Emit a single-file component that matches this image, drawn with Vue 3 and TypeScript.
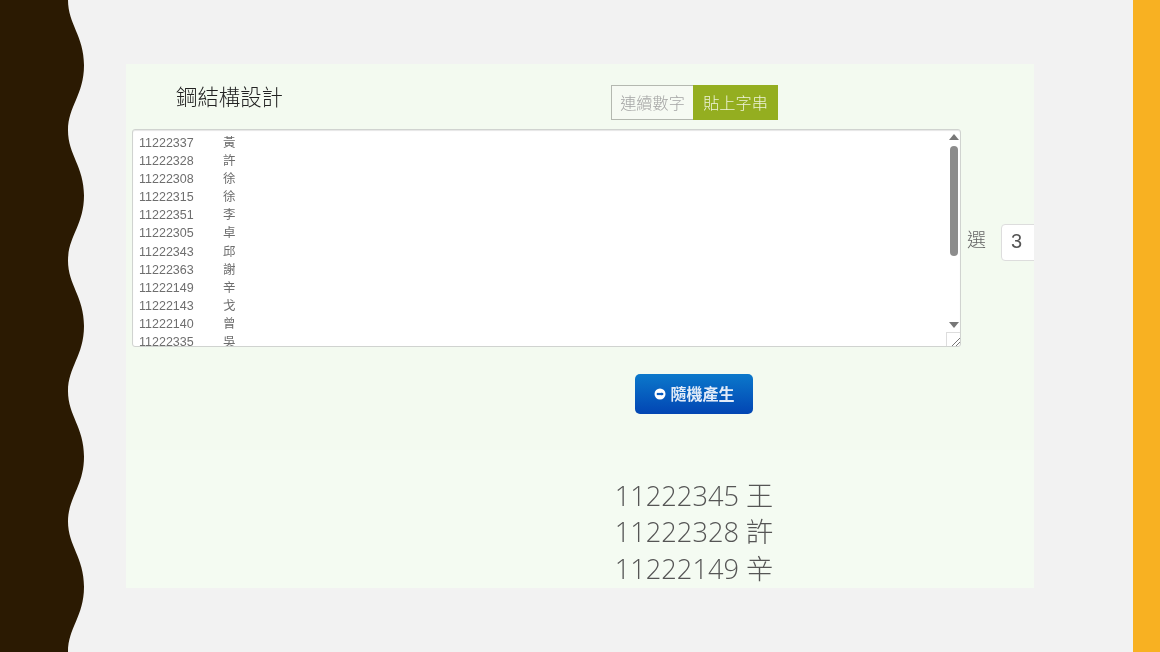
<template>
  <div class="slide">
    <svg class="wave" viewBox="0 0 84 652" width="84" height="652">
      <path :d="wavePath" fill="#2b1a02" />
    </svg>
    <div class="content">
      <div class="card">
        <div class="top">
          <div class="inner">
            <div class="head">
              <div class="title">鋼結構設計</div>
              <div class="toggle">
                <div class="opt">連續數字</div>
                <div class="opt on">貼上字串</div>
              </div>
            </div>
            <div class="form">
              <div class="box">
                <div class="rows">
                  <div v-for="s in students" :key="s.id" class="row">
                    <span>{{ s.id }}</span>
                    <span>{{ s.name }}</span>
                  </div>
                </div>
                <div class="bar">
                  <div class="track">
                    <div class="arrow up"></div>
                    <div class="thumb"></div>
                    <div class="arrow down"></div>
                  </div>
                  <div class="grip">
                    <svg viewBox="0 0 14 14" width="14" height="14">
                      <path d="M5 13 L13 5 M9 13 L13 9" stroke="#777" stroke-width="1" fill="none" />
                    </svg>
                  </div>
                </div>
              </div>
              <span class="pick">選</span>
              <div class="num">3</div>
            </div>
            <div class="action">
              <button class="go">
                <svg class="go-icon" viewBox="0 0 12 12" width="12" height="12">
                  <circle cx="6" cy="6" r="5.5" fill="#fff" />
                  <path d="M2.8 6 H9.2" stroke="#0a5cc0" stroke-width="2.2" fill="none" />
                  <path d="M7 4.4 L9.4 6 L7 7.6 Z" fill="#0a5cc0" />
                </svg>
                <span class="go-text">隨機產生</span>
              </button>
            </div>
          </div>
        </div>
        <div class="bottom">
          <div class="inner results">
            <div v-for="r in results" :key="r">{{ r }}</div>
          </div>
        </div>
      </div>
    </div>
    <div class="accent"></div>
  </div>
</template>

<script setup lang="ts">
const raw = [
  '11222337 黃', '11222328 許', '11222308 徐', '11222315 徐',
  '11222351 李', '11222305 卓', '11222343 邱', '11222363 謝',
  '11222149 辛', '11222143 戈', '11222140 曾', '11222335 吳'
]
const students = raw.map((line) => {
  const [id, name] = line.split(' ')
  return { id, name }
})

const results = ['11222345 王', '11222328 許', '11222149 辛']

// scalloped edge, one swing every 130.4px
let wavePath = 'M0 0 H68'
for (let i = 0; i < 5; i++) {
  const y = i * 130.4
  wavePath += ` C68 ${y + 24} 84 ${y + 36} 84 ${y + 65.2} C84 ${y + 95} 68 ${y + 106} 68 ${y + 130.4}`
}
wavePath += ' V652 H0 Z'
</script>

<style>
html, body {
  margin: 0;
  background: #f2f2f2;
}
</style>

<style scoped>
.slide {
  display: flex;
  width: 1160px;
  height: 652px;
  overflow: hidden;
  background: #f2f2f2;
  font-family: "Liberation Sans", "Noto Sans CJK TC", sans-serif;
}
.wave {
  flex: none;
  display: block;
}
.content {
  flex: 1;
  padding: 64px 0 0 42px;
}
.accent {
  flex: none;
  width: 27px;
  background: #f8b122;
}
.card {
  width: 908px;
  height: 524px;
  overflow: hidden;
  filter: blur(0.3px);
}
.top {
  height: 386px;
  padding: 21px 0 0 6px;
  box-sizing: border-box;
  background: #f3faf0;
}
.bottom {
  height: 138px;
  padding: 28px 0 0 6px;
  box-sizing: border-box;
  background: #f4fbf2;
}
.inner {
  width: 1124px;
}
.head {
  position: relative;
  display: flex;
  justify-content: center;
  height: 44px;
}
.title {
  position: absolute;
  left: 44px;
  top: -1px;
  font-family: "Noto Sans CJK TC", sans-serif;
  font-size: 21.4px;
  font-weight: 300;
  line-height: 24px;
  color: #222;
}
.toggle {
  display: flex;
  height: 35px;
  font-family: "Noto Sans CJK TC", sans-serif;
  font-size: 16.2px;
  font-weight: 300;
}
.opt {
  width: 82px;
  box-sizing: border-box;
  padding-left: 1px;
  border: 1px solid #b4b8b0;
  border-right: none;
  line-height: 33px;
  text-align: center;
  color: #a4a4a4;
  background: #f6faf3;
}
.opt.on {
  width: 85px;
  border: none;
  line-height: 35px;
  color: #eef3d8;
  background: #94ae20;
}
.form {
  display: flex;
  align-items: center;
}
.box {
  display: flex;
  width: 829px;
  height: 218px;
  box-sizing: border-box;
  border: 1px solid #d0d3d0;
  border-radius: 3px;
  background: #fff;
  box-shadow: inset 0 1px 1px rgba(0, 0, 0, 0.1);
  overflow: hidden;
}
.rows {
  flex: 1;
  padding: 4px 0 0 6px;
  font-size: 12.5px;
  line-height: 18.1px;
  color: #6e6e6e;
}
.row {
  display: grid;
  grid-template-columns: 84px 1fr;
}
.bar {
  display: flex;
  flex-direction: column;
  width: 13px;
}
.track {
  flex: 1;
  display: flex;
  flex-direction: column;
  align-items: center;
  padding-top: 4px;
}
.arrow {
  width: 0;
  height: 0;
  border-left: 5px solid transparent;
  border-right: 5px solid transparent;
}
.arrow.up {
  border-bottom: 6px solid #777;
}
.arrow.down {
  margin-top: 66px;
  border-top: 6px solid #777;
}
.thumb {
  width: 8px;
  height: 110px;
  margin-top: 6px;
  border-radius: 4px;
  background: #8c8c8c;
}
.grip {
  width: 14px;
  height: 14px;
  margin-left: -1px;
  box-sizing: border-box;
  border: 1px solid #ddd;
  border-width: 1px 0 0 1px;
}
.pick {
  margin-left: 6px;
  font-family: "Noto Sans CJK TC", sans-serif;
  font-size: 19px;
  font-weight: 300;
  color: #666;
}
.num {
  width: 70px;
  height: 37px;
  margin: 8px 0 0 15px;
  padding-left: 9px;
  box-sizing: border-box;
  border: 1px solid #ddd;
  border-radius: 4px;
  background: #fff;
  font-size: 20px;
  line-height: 33px;
  color: #555;
}
.action {
  display: flex;
  justify-content: center;
  margin-top: 27px;
}
.go {
  display: flex;
  align-items: center;
  justify-content: center;
  gap: 4px;
  width: 118px;
  height: 40px;
  padding: 0 0 0 1px;
  border: none;
  border-radius: 5px;
  background: linear-gradient(#0b78cb, #0245b3);
  color: #e2ebf8;
  font-family: "Noto Sans CJK TC", sans-serif;
  font-size: 16px;
  font-weight: 700;
}
.go-icon {
  margin-top: -1px;
}
.go-text {
  line-height: 20px;
  margin-top: -3px;
}
.results {
  text-align: center;
  font-family: "Open Sans", "Noto Sans CJK TC", sans-serif;
  font-size: 27.2px;
  font-weight: 300;
  line-height: 36.3px;
  color: #555;
}
</style>
